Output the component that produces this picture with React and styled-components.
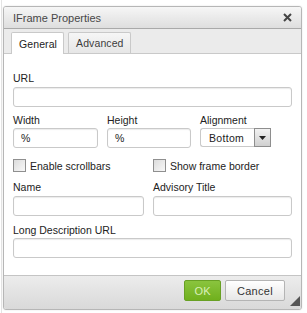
import React from 'react';
import styled, { createGlobalStyle } from 'styled-components';

const GlobalStyle = createGlobalStyle`
	html, body {
		margin: 0;
		padding: 0;
		background: #fff;
		font-family: "Liberation Sans", Arial, sans-serif;
	}
`;

const Page = styled.div`
	width: 307px;
	height: 313px;
	padding: 6px 0 0 3px;
	box-sizing: border-box;
	background: linear-gradient(90deg, #fff 0, #fff 1px, #e4e4e4 1px, #e4e4e4 2px, #fff 2px);
`;

const Dialog = styled.div`
	width: 299px;
	height: 304px;
	box-sizing: border-box;
	border: 1px solid #b6b6b6;
	border-radius: 3px;
	background: #fff;
	display: flex;
	flex-direction: column;
	box-shadow: 0 0 2px rgba(0, 0, 0, 0.12);
	overflow: hidden;
`;

const TitleBar = styled.div`
	height: 21px;
	flex: none;
	display: flex;
	align-items: center;
	justify-content: space-between;
	padding: 0 9px 0 9px;
	background: linear-gradient(#f6f6f6, #dedede);
	border-bottom: 1px solid #a9a9a9;
	color: #474747;
	font-size: 11px;
`;

const CloseButton = styled.svg`
	width: 9px;
	height: 9px;
`;

const TabStrip = styled.div`
	height: 24px;
	flex: none;
	display: flex;
	align-items: flex-end;
	gap: 4px;
	padding: 0 7px;
	background: #ebebeb;
	border-bottom: 1px solid #c9c9c9;
`;

const Tab = styled.div`
	height: ${p => (p.active ? '22px' : '21px')};
	box-sizing: border-box;
	padding: 0 6px 0 7px;
	display: flex;
	align-items: center;
	font-size: 10.5px;
	letter-spacing: 0.1px;
	color: ${p => (p.active ? '#222' : '#3c3c3c')};
	background: ${p => (p.active ? '#fff' : 'linear-gradient(#f6f6f6, #e6e6e6)')};
	border: 1px solid #c9c9c9;
	border-bottom: none;
	border-radius: 2px 2px 0 0;
	margin-bottom: ${p => (p.active ? '-1px' : '0')};
	position: relative;
`;

const Content = styled.div`
	flex: 1;
	padding: 18px 9px 0 9px;
	display: flex;
	flex-direction: column;
`;

const Label = styled.div`
	font-size: 10.5px;
	color: #222;
	height: 13px;
	line-height: 13px;
	margin-bottom: ${p => p.gap || 1}px;
`;

const Input = styled.div`
	height: 20px;
	box-sizing: border-box;
	border: 1px solid #c9c9c9;
	border-radius: 3px;
	box-shadow: inset 0 1px 1px rgba(0, 0, 0, 0.08);
	background: #fff;
	font-size: 10.5px;
	color: #222;
	display: flex;
	align-items: center;
	padding: 0 7px;
`;

const Field = styled.div`
	display: flex;
	flex-direction: column;
	margin-bottom: ${p => p.mb || 0}px;
`;

const Row = styled.div`
	display: grid;
	grid-template-columns: ${p => p.cols};
	column-gap: 9px;
	margin-bottom: ${p => p.mb || 0}px;
`;

const Select = styled.div`
	width: 71px;
	height: 19px;
	display: flex;
	box-sizing: border-box;
`;

const SelectValue = styled.div`
	flex: 1;
	border: 1px solid #c9c9c9;
	border-right: none;
	border-radius: 3px 0 0 3px;
	background: #fff;
	font-size: 10.5px;
	letter-spacing: 0.3px;
	color: #222;
	display: flex;
	align-items: center;
	padding-left: 8px;
`;

const SelectArrow = styled.div`
	width: 17px;
	box-sizing: border-box;
	border: 1px solid #8e8e8e;
	background: linear-gradient(#f2f2f2, #d0d0d0);
	display: flex;
	align-items: center;
	justify-content: center;
`;

const Check = styled.label`
	display: flex;
	align-items: center;
	gap: 4px;
	font-size: 10.5px;
	color: #222;
	height: 13px;
`;

const Box = styled.span`
	width: 13px;
	height: 13px;
	box-sizing: border-box;
	border: 1px solid #8f8f8f;
	background: linear-gradient(135deg, #dcdcdc, #f8f8f8);
`;

const Footer = styled.div`
	height: 29px;
	flex: none;
	border-top: 1px solid #c4c4c4;
	background: linear-gradient(#ececec, #d9d9d9);
	display: flex;
	align-items: flex-start;
	justify-content: flex-end;
	padding: 4px 1px 0 0;
`;

const Button = styled.div`
	height: 21px;
	box-sizing: border-box;
	padding: 0 ${p => p.px}px;
	margin-right: ${p => p.mr}px;
	border-radius: 2px;
	font-size: 11px;
	display: flex;
	align-items: center;
	border: 1px solid ${p => (p.primary ? '#68a024' : '#b4b4b4')};
	background: ${p => (p.primary ? 'linear-gradient(#8ac43e, #70b01d)' : 'linear-gradient(#ffffff, #e7e7e7)')};
	color: ${p => (p.primary ? '#d9f0b8' : '#333')};
	letter-spacing: 0.3px;
`;

const Grip = styled.svg`
	width: 10px;
	height: 10px;
	flex: none;
	align-self: flex-end;
	margin-bottom: 3px;
`;

export default function App() {
	return (
		<Page>
			<GlobalStyle />
			<Dialog>
				<TitleBar>
					<span>IFrame Properties</span>
					<CloseButton viewBox="0 0 9 9">
						<path d="M1 1 L8 8 M8 1 L1 8" stroke="#444" strokeWidth="2" />
					</CloseButton>
				</TitleBar>
				<TabStrip>
					<Tab active>General</Tab>
					<Tab>Advanced</Tab>
				</TabStrip>
				<Content>
					<Field mb={7}>
						<Label gap={2}>URL</Label>
						<Input />
					</Field>
					<Row cols="85px 84px 1fr" mb={11}>
						<Field>
							<Label>Width</Label>
							<Input>%</Input>
						</Field>
						<Field>
							<Label>Height</Label>
							<Input>%</Input>
						</Field>
						<Field>
							<Label>Alignment</Label>
							<Select>
								<SelectValue>Bottom</SelectValue>
								<SelectArrow>
									<svg width="7" height="4" viewBox="0 0 7 4">
										<path d="M0 0 L7 0 L3.5 4 Z" fill="#222" />
									</svg>
								</SelectArrow>
							</Select>
						</Field>
					</Row>
					<Row cols="131px 1fr" mb={9}>
						<Check>
							<Box />
							Enable scrollbars
						</Check>
						<Check>
							<Box />
							Show frame border
						</Check>
					</Row>
					<Row cols="131px 1fr" mb={8}>
						<Field>
							<Label gap={2}>Name</Label>
							<Input />
						</Field>
						<Field>
							<Label gap={2}>Advisory Title</Label>
							<Input />
						</Field>
					</Row>
					<Field>
						<Label gap={1}>Long Description URL</Label>
						<Input />
					</Field>
				</Content>
				<Footer>
					<Button primary px={9} mr={4}>OK</Button>
					<Button px={11} mr={5}>Cancel</Button>
					<Grip viewBox="0 0 10 10">
						<path d="M10 0 L10 10 L0 10 Z" fill="#555" />
					</Grip>
				</Footer>
			</Dialog>
		</Page>
	);
}
